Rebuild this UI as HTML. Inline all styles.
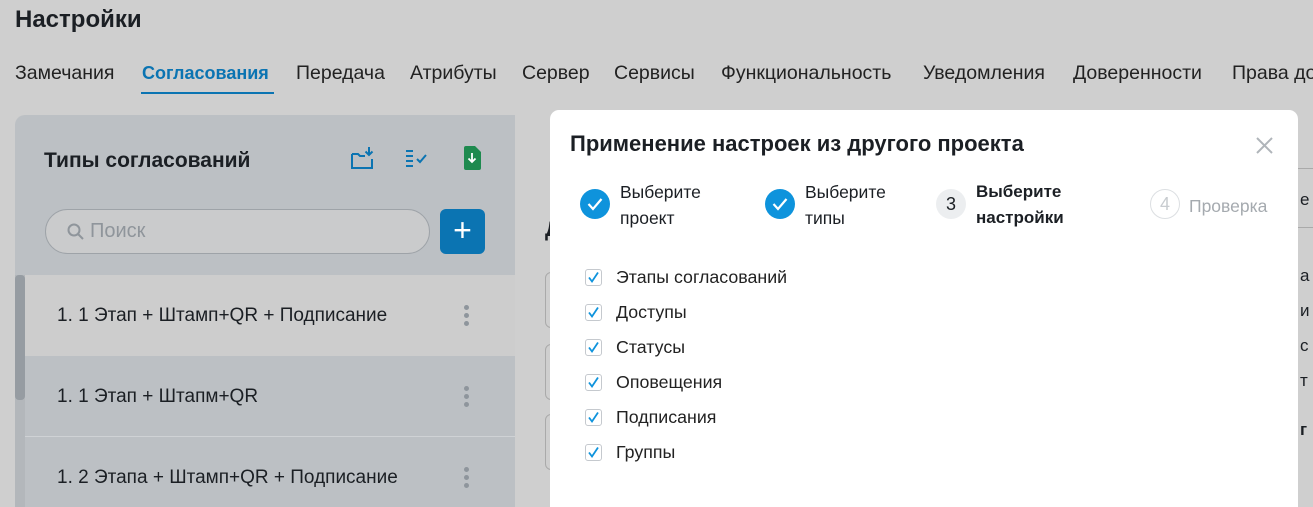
<!DOCTYPE html>
<html><head><meta charset="utf-8"><style>
*{margin:0;padding:0;box-sizing:border-box}
html,body{width:1313px;height:507px;overflow:hidden}
body{background:#cfcfcf;font-family:"Liberation Sans","DejaVu Sans",sans-serif;color:#1b1f24;position:relative}
.abs{position:absolute;white-space:nowrap}
.tab{position:absolute;top:62px;font-size:19.5px;color:#222;white-space:nowrap}
.panel{position:absolute;left:15px;top:115px;width:500px;height:392px;background:#bcc0c4;border-radius:10px 0 0 0;overflow:hidden}
.row{position:absolute;left:10px;width:490px;height:81px;font-size:19px;line-height:81px;padding-left:32px}
.dots{position:absolute;right:46px;top:30px;width:5px}
.dots i{display:block;width:5px;height:5px;border-radius:50%;background:#8e959c;margin-bottom:3px}
.modal{position:absolute;left:550px;top:110px;width:748px;height:397px;background:#fff;border-radius:9px 9px 0 0}
.circ{position:absolute;width:30px;height:30px;border-radius:50%;top:79px}
.st{position:absolute;top:69px;font-size:17.5px;line-height:26px;white-space:nowrap}
.cb{position:absolute;left:35px;width:17px;height:17px;border:1px solid #c5c9ce;border-radius:3px}
.lab{position:absolute;left:66px;font-size:17.8px;color:#222}
</style></head><body>
<div class="abs" style="left:15px;top:6px;font-size:24px;font-weight:bold">Настройки</div>
<div class="tab" style="left:15px">Замечания</div>
<div class="tab" style="left:142px;color:#0b74b2;font-weight:bold;font-size:18px;top:63px">Согласования</div>
<div class="abs" style="left:141px;top:92px;width:133px;height:2px;background:#0b74b2"></div>
<div class="tab" style="left:296px">Передача</div>
<div class="tab" style="left:410px">Атрибуты</div>
<div class="tab" style="left:522px">Сервер</div>
<div class="tab" style="left:614px">Сервисы</div>
<div class="tab" style="left:721px">Функциональность</div>
<div class="tab" style="left:923px">Уведомления</div>
<div class="tab" style="left:1073px">Доверенности</div>
<div class="tab" style="left:1232px">Права до</div>

<div class="panel">
 <div class="abs" style="left:29px;top:34px;font-size:21px;font-weight:bold">Типы согласований</div>
 <svg class="abs" style="left:335px;top:30px" width="26" height="26" viewBox="0 0 26 26" fill="none" stroke="#0b74b2" stroke-width="2"><path d="M2 9h6l2 2h5M2 9v14h20V14"/><path d="M19 2v8M15.5 6.5 19 10l3.5-3.5"/></svg>
 <svg class="abs" style="left:390px;top:34px" width="26" height="18" viewBox="0 0 26 18" fill="none" stroke="#0b74b2" stroke-width="2"><path d="M1 2h7M1 7h7M1 12h7M1 17h7"/><path d="M12 10l3 3 6-7"/></svg>
 <svg class="abs" style="left:448px;top:31px" width="18" height="24" viewBox="0 0 18 24"><path d="M3 0h9l6 6v16a2 2 0 0 1-2 2H3a2 2 0 0 1-2-2V2a2 2 0 0 1 2-2z" fill="#1e8a4f"/><path d="M9 7v9M5.5 12.5 9 16l3.5-3.5" stroke="#fff" stroke-width="1.8" fill="none"/></svg>
 <div class="abs" style="left:30px;top:94px;width:385px;height:45px;border:1px solid #9ea3a8;border-radius:23px;background:#cacbcc"></div>
 <svg class="abs" style="left:52px;top:108px" width="18" height="18" viewBox="0 0 18 18" fill="none" stroke="#8f959b" stroke-width="2"><circle cx="7" cy="7" r="5.5"/><path d="M11 11l5 5"/></svg>
 <div class="abs" style="left:75px;top:105px;font-size:20px;color:#8f959b">Поиск</div>
 <div class="abs" style="left:425px;top:94px;width:45px;height:45px;border-radius:6px;background:#0b74b2;color:#fff;font-size:32px;line-height:43px;text-align:center">+</div>
 <div class="row" style="top:160px;background:#cdcdcd">1. 1 Этап + Штамп+QR + Подписание<div class="dots"><i></i><i></i><i></i></div></div>
 <div class="row" style="top:241px;border-bottom:1px solid #cfd2d5">1. 1 Этап + Штапм+QR<div class="dots"><i></i><i></i><i></i></div></div>
 <div class="row" style="top:322px">1. 2 Этапа + Штамп+QR + Подписание<div class="dots"><i></i><i></i><i></i></div></div>
 <div class="abs" style="left:0;top:160px;width:10px;height:240px;background:#b3b7bb"></div>
 <div class="abs" style="left:0;top:160px;width:10px;height:125px;background:#969ca2;border-radius:4px"></div>
</div>
<div class="abs" style="left:545px;top:218px;font-size:21px;font-weight:bold">Д</div>
<div class="abs" style="left:545px;top:272px;width:10px;height:56px;border:1px solid #aaa;border-radius:6px 0 0 6px"></div>
<div class="abs" style="left:545px;top:344px;width:10px;height:56px;border:1px solid #aaa;border-radius:6px 0 0 6px"></div>
<div class="abs" style="left:545px;top:414px;width:10px;height:56px;border:1px solid #aaa;border-radius:6px 0 0 6px"></div>
<div class="abs" style="left:1298px;top:168px;width:15px;height:60px;border-top:1px solid #aaa;border-bottom:1px solid #aaa"></div>
<div class="abs" style="left:1300px;top:190px;font-size:17px">е</div>
<div class="abs" style="left:1300px;top:258px;font-size:17px;line-height:35px">а<br>и<br>с<br>т</div>
<div class="abs" style="left:1300px;top:420px;font-size:17px;font-weight:bold">г</div>

<div class="modal">
 <div class="abs" style="left:20px;top:21px;font-size:22px;font-weight:bold;color:#1b1f24">Применение настроек из другого проекта</div>
 <svg class="abs" style="left:706px;top:27px" width="17" height="17" viewBox="0 0 17 17" stroke="#b0b5ba" stroke-width="2"><path d="M1 1l15 15M16 1 1 16"/></svg>
 <div class="circ" style="left:30px;background:#0e93dc"></div>
 <svg class="abs" style="left:37px;top:87px" width="16" height="14" viewBox="0 0 16 14" fill="none" stroke="#fff" stroke-width="2.2"><path d="M1.5 7l4.5 5L14.5 2"/></svg>
 <div class="st" style="left:70px">Выберите<br>проект</div>
 <div class="circ" style="left:215px;background:#0e93dc"></div>
 <svg class="abs" style="left:222px;top:87px" width="16" height="14" viewBox="0 0 16 14" fill="none" stroke="#fff" stroke-width="2.2"><path d="M1.5 7l4.5 5L14.5 2"/></svg>
 <div class="st" style="left:255px">Выберите<br>типы</div>
 <div class="circ" style="left:386px;background:#eceef0;text-align:center;line-height:30px;font-size:18px">3</div>
 <div class="st" style="left:426px;font-weight:bold;font-size:17px">Выберите<br>настройки</div>
 <div class="circ" style="left:600px;border:1px solid #dcdfe2;text-align:center;line-height:28px;font-size:18px;color:#c8ccd0">4</div>
 <div class="st" style="left:639px;top:83px;color:#a5aaaf">Проверка</div>
 <div class="cb" style="top:159px"></div><div class="lab" style="top:157px">Этапы согласований</div>
 <div class="cb" style="top:194px"></div><div class="lab" style="top:192px">Доступы</div>
 <div class="cb" style="top:229px"></div><div class="lab" style="top:227px">Статусы</div>
 <div class="cb" style="top:264px"></div><div class="lab" style="top:262px">Оповещения</div>
 <div class="cb" style="top:299px"></div><div class="lab" style="top:297px">Подписания</div>
 <div class="cb" style="top:334px"></div><div class="lab" style="top:332px">Группы</div>
 <svg class="abs" style="left:35px;top:159px" width="17" height="200" viewBox="0 0 17 200" fill="none" stroke="#0e93dc" stroke-width="1.8">
  <path d="M4 8.5l3 4 6-9"/><path d="M4 43.5l3 4 6-9"/><path d="M4 78.5l3 4 6-9"/><path d="M4 113.5l3 4 6-9"/><path d="M4 148.5l3 4 6-9"/><path d="M4 183.5l3 4 6-9"/>
 </svg>
</div>
</body></html>
